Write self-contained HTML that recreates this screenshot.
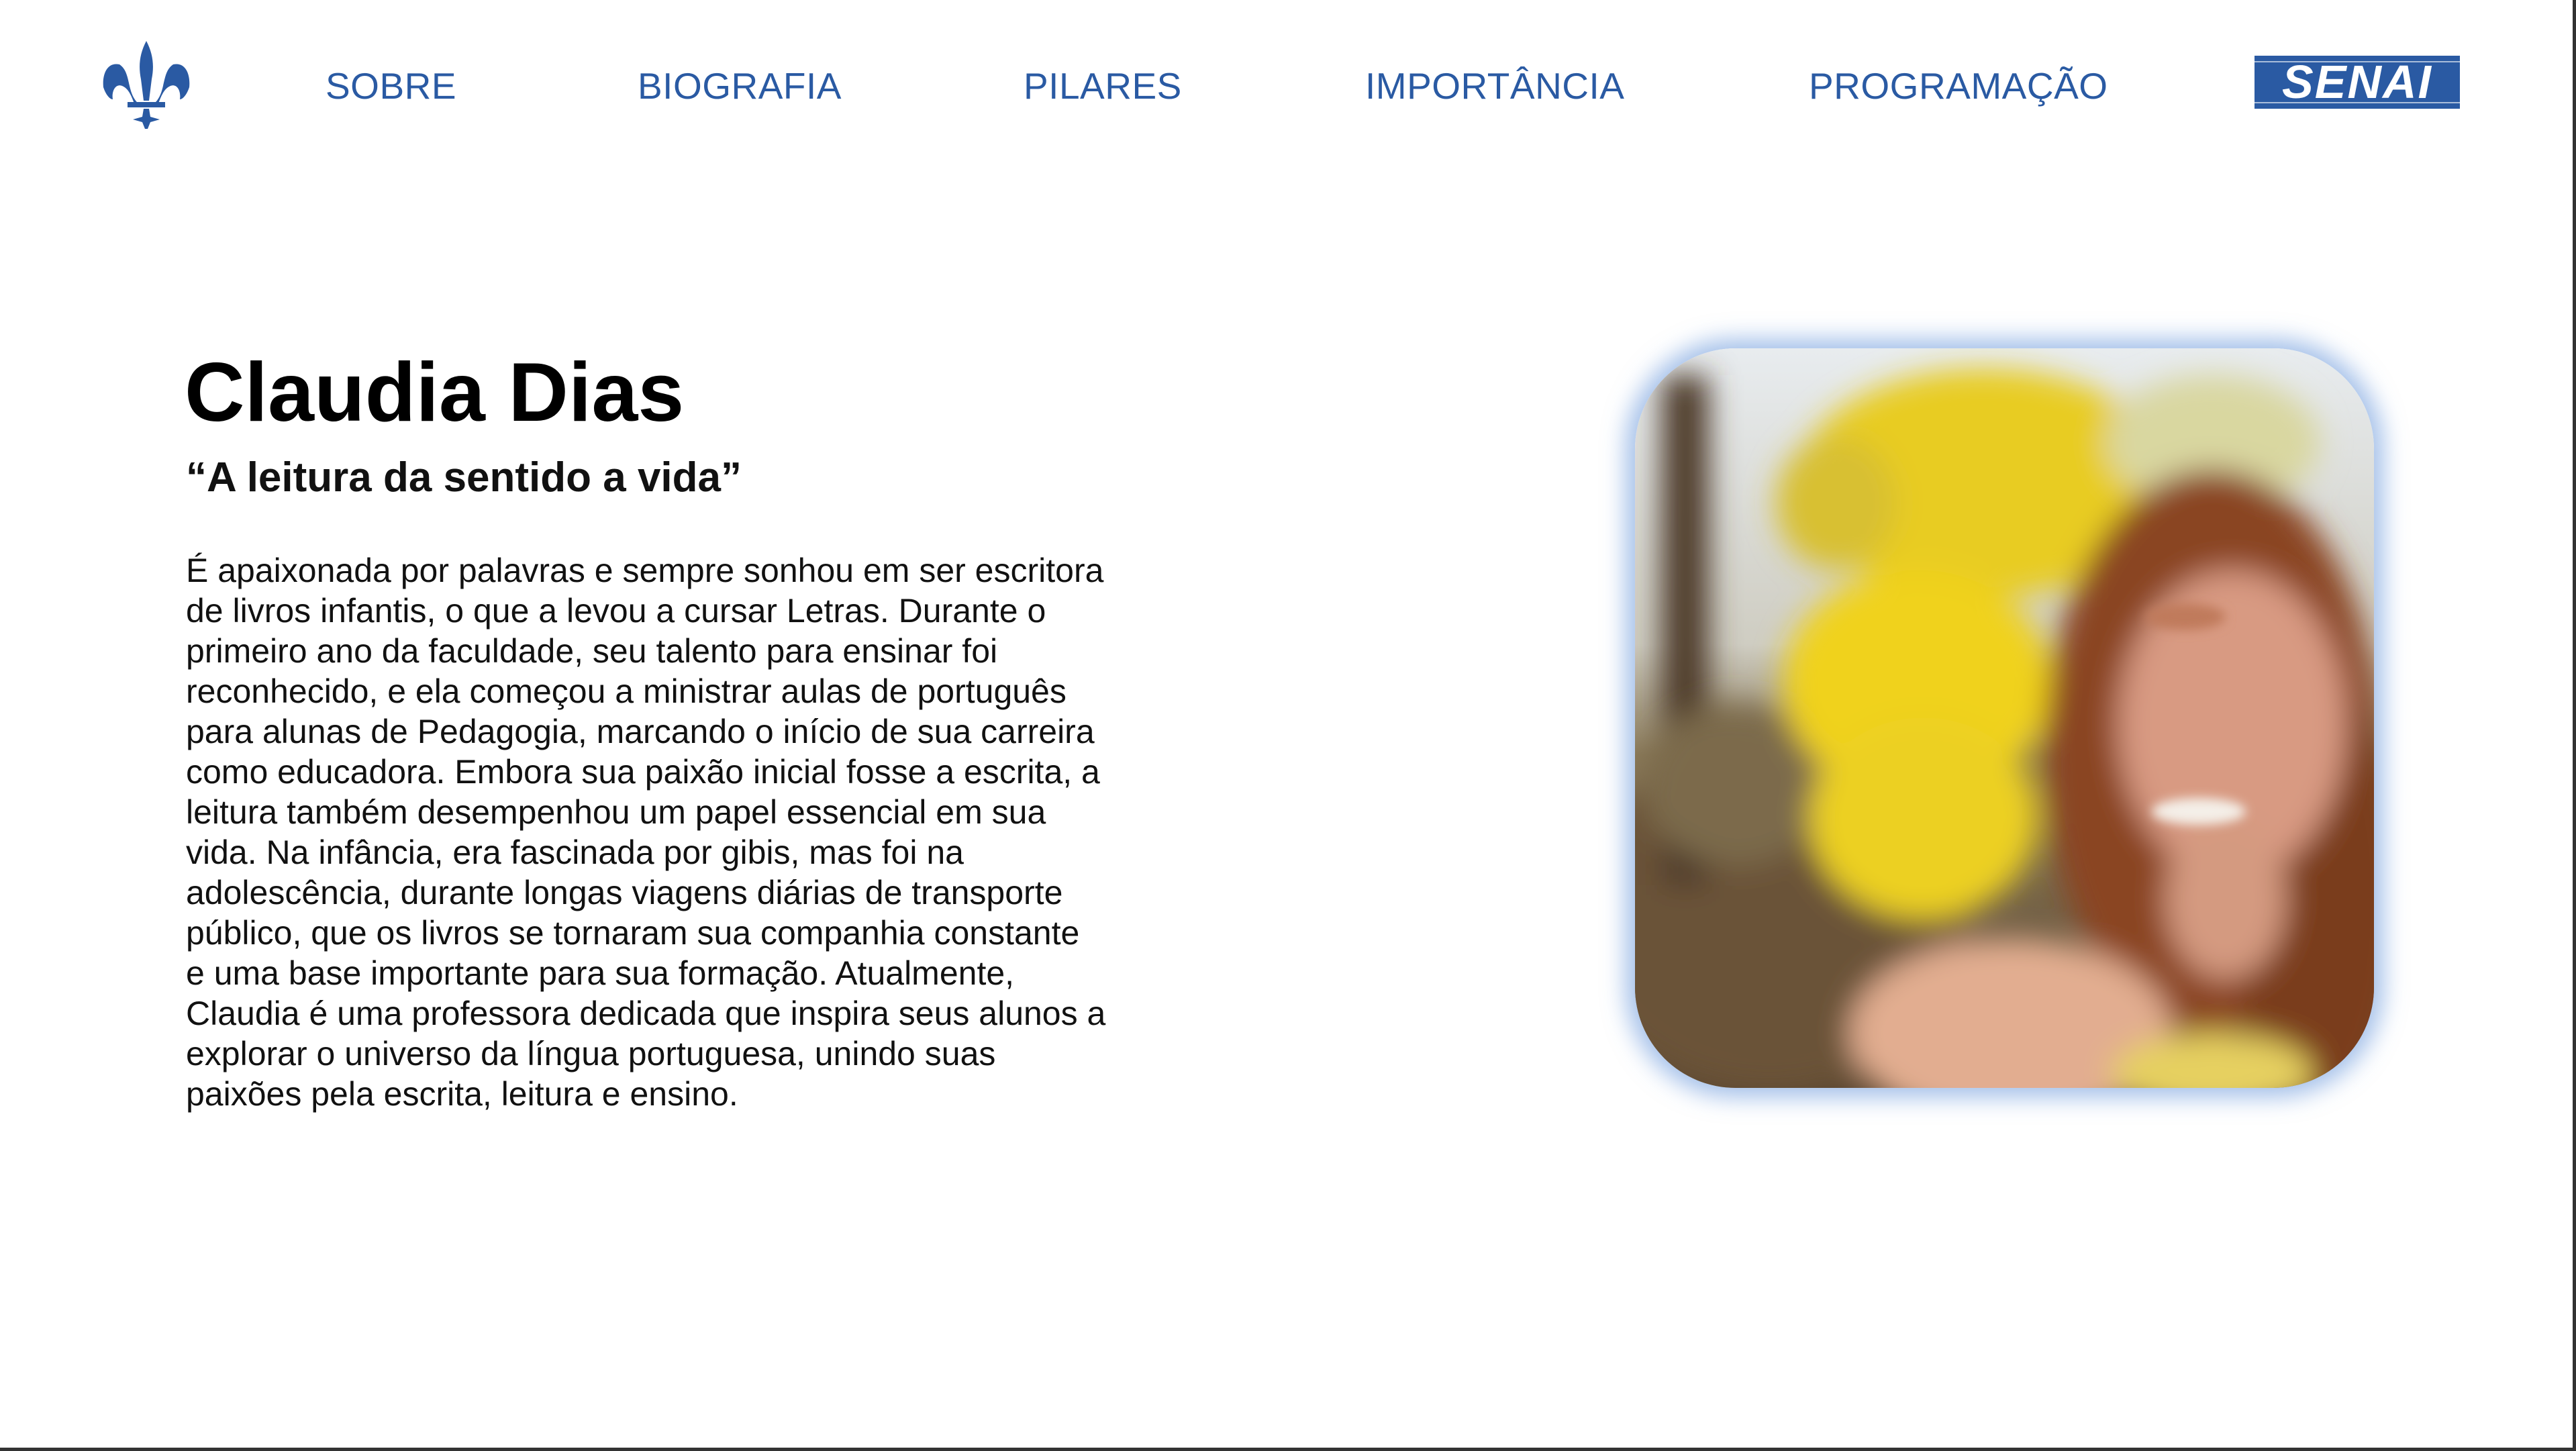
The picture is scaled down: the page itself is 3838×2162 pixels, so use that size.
<!DOCTYPE html>
<html><head><meta charset="utf-8"><style>
html,body{margin:0;padding:0}
body{width:3838px;height:2162px;position:relative;background:#fff;overflow:hidden;font-family:"Liberation Sans",sans-serif}
.edge-r{position:absolute;right:0;top:0;width:5px;height:2162px;background:#333}
.edge-b{position:absolute;left:0;bottom:0;height:5px;width:3838px;background:#333}
.nav{position:absolute;top:88px;font-size:55px;color:#2a5aa3;letter-spacing:0.5px;line-height:80px}
h1{position:absolute;left:275px;top:505px;margin:0;font-size:124px;font-weight:bold;color:#000;line-height:160px}
.q{position:absolute;left:277px;top:672px;font-size:62px;font-weight:bold;color:#111;line-height:80px}
.p{position:absolute;left:277px;top:820px;font-size:50px;line-height:60px;color:#111;white-space:nowrap}
.photo{position:absolute;left:2436px;top:519px;width:1101px;height:1102px;border-radius:150px;overflow:hidden;box-shadow:0 0 34px 14px rgba(90,140,215,.55)}
.senai{position:absolute;left:3359px;top:83px;width:306px;height:79px;background:#2a5aa3}
</style></head><body>
<div class="edge-r"></div><div class="edge-b"></div>

<svg style="position:absolute;left:148px;top:58px" width="140" height="136" viewBox="0 0 140 136">
<g fill="#2a5aa3">
<path d="M70 3 C60 22 58 40 62 60 L66 92 L74 92 L78 60 C82 40 80 22 70 3Z"/>
<path d="M58 96 C40 80 48 50 30 38 C12 34 4 52 6 72 C10 84 16 90 20 90 C18 78 24 66 34 70 C44 74 48 86 52 96Z"/>
<path d="M82 96 C100 80 92 50 110 38 C128 34 136 52 134 72 C130 84 124 90 120 90 C122 78 116 66 106 70 C96 74 92 86 88 96Z"/>
<rect x="42" y="94" width="56" height="8"/>
<path d="M66 104 L74 104 L76 116 L90 120 L76 124 L72 134 L68 134 L64 124 L50 120 L64 116Z"/>
</g></svg>

<div class="nav" style="left:485px">SOBRE</div>
<div class="nav" style="left:950px">BIOGRAFIA</div>
<div class="nav" style="left:1525px">PILARES</div>
<div class="nav" style="left:2034px">IMPORTÂNCIA</div>
<div class="nav" style="left:2695px">PROGRAMAÇÃO</div>

<div class="senai">
<div style="position:absolute;left:0;top:8px;width:306px;height:2px;background:#fff;opacity:.6"></div>
<div style="position:absolute;left:0;bottom:8px;width:306px;height:2px;background:#fff;opacity:.6"></div>
<div style="position:absolute;left:0;top:0;width:306px;text-align:center;font-size:70px;line-height:79px;font-weight:bold;font-style:italic;color:#fff;letter-spacing:2px">SENAI</div>
</div>

<h1>Claudia Dias</h1>
<div class="q">“A leitura da sentido a vida”</div>
<div class="p">É apaixonada por palavras e sempre sonhou em ser escritora<br>de livros infantis, o que a levou a cursar Letras. Durante o<br>primeiro ano da faculdade, seu talento para ensinar foi<br>reconhecido, e ela começou a ministrar aulas de português<br>para alunas de Pedagogia, marcando o início de sua carreira<br>como educadora. Embora sua paixão inicial fosse a escrita, a<br>leitura também desempenhou um papel essencial em sua<br>vida. Na infância, era fascinada por gibis, mas foi na<br>adolescência, durante longas viagens diárias de transporte<br>público, que os livros se tornaram sua companhia constante<br>e uma base importante para sua formação. Atualmente,<br>Claudia é uma professora dedicada que inspira seus alunos a<br>explorar o universo da língua portuguesa, unindo suas<br>paixões pela escrita, leitura e ensino.</div>

<div class="photo">
<svg width="1101" height="1102" viewBox="0 0 1101 1102">
<defs>
<filter id="b" x="-50%" y="-50%" width="200%" height="200%"><feGaussianBlur stdDeviation="22"/></filter>
<filter id="s" x="-50%" y="-50%" width="200%" height="200%"><feGaussianBlur stdDeviation="8"/></filter>
<linearGradient id="bg" x1="0" y1="0" x2="0" y2="1">
<stop offset="0" stop-color="#e8ecef"/><stop offset=".4" stop-color="#cfcdc2"/><stop offset=".55" stop-color="#8a7a5a"/><stop offset="1" stop-color="#5b4630"/></linearGradient>
</defs>
<rect width="1101" height="1102" fill="url(#bg)"/>
<g filter="url(#b)">
<ellipse cx="200" cy="850" rx="300" ry="260" fill="#6a5238"/>
<rect x="40" y="40" width="70" height="760" fill="#4e3b2a"/>
<ellipse cx="150" cy="650" rx="140" ry="120" fill="#7b6a4c"/>
<ellipse cx="520" cy="200" rx="280" ry="170" fill="#e8cc22"/>
<ellipse cx="420" cy="500" rx="200" ry="170" fill="#f0d21c"/>
<ellipse cx="430" cy="700" rx="170" ry="150" fill="#ecd020"/>
<ellipse cx="300" cy="230" rx="90" ry="100" fill="#d8c030"/>
<ellipse cx="860" cy="140" rx="160" ry="100" fill="#d9d7a0"/>
<ellipse cx="860" cy="600" rx="250" ry="420" fill="#8a4520"/>
<ellipse cx="1020" cy="820" rx="130" ry="320" fill="#7a3c1e"/>
<ellipse cx="890" cy="560" rx="170" ry="230" fill="#d89a82"/>
<ellipse cx="560" cy="1020" rx="240" ry="140" fill="#e2ad90"/>
<ellipse cx="880" cy="820" rx="90" ry="120" fill="#d49a80"/>
<ellipse cx="860" cy="1080" rx="150" ry="60" fill="#e6d060"/>
</g>
<g filter="url(#s)">
<ellipse cx="840" cy="690" rx="70" ry="20" fill="#f4efe8"/>
<ellipse cx="820" cy="400" rx="60" ry="20" fill="#c07a5c"/>
</g>
</svg>
</div>
</body></html>
